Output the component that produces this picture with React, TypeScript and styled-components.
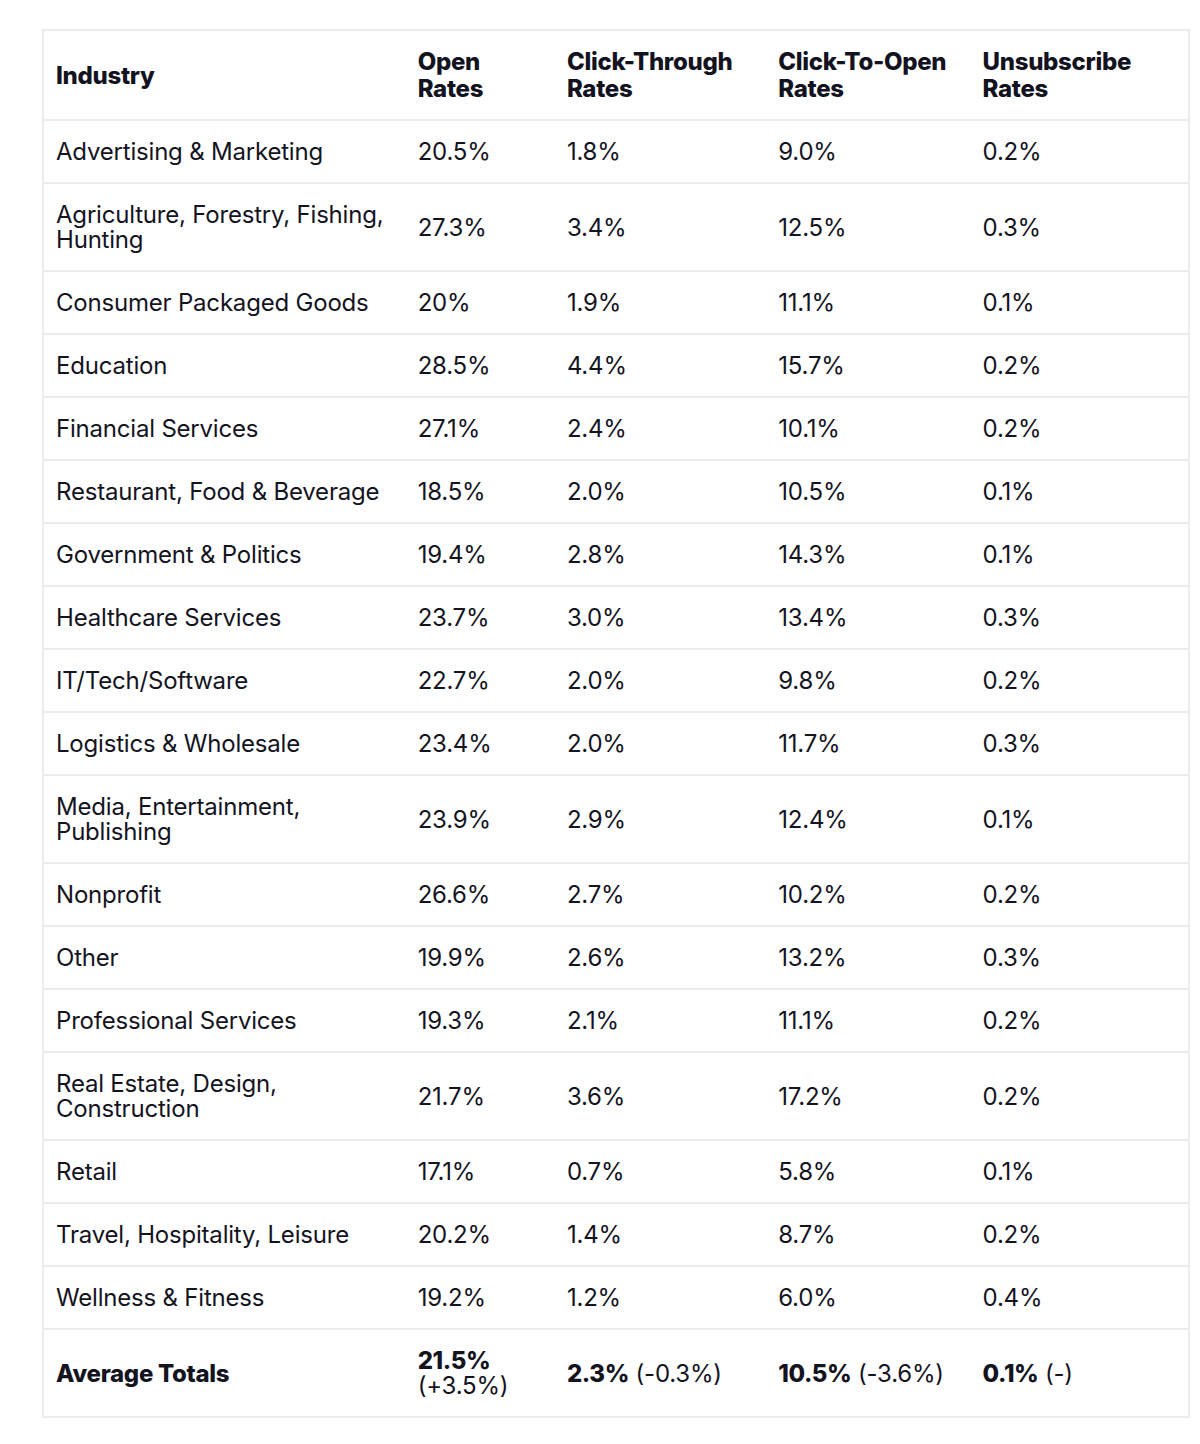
import React from "react";
import styled, { createGlobalStyle } from "styled-components";

const Global = createGlobalStyle`
  html, body { margin: 0; padding: 0; background: #ffffff; }
  body { font-family: Inter, "Noto Sans", "Liberation Sans", sans-serif; color: #14141f; }
`;

const Page = styled.div`
  padding: 29px 10px 26px 42px;
`;

const Table = styled.table`
  width: 1148px;
  border-collapse: collapse;
  table-layout: fixed;
  border: 2px solid #ebebeb;
`;

const HeadCell = styled.th`
  text-align: left;
  vertical-align: middle;
  font-weight: 800;
  font-size: 24px;
  line-height: 27px;
  letter-spacing: -0.3px;
  padding: 17px 12px;
  color: #13131f;
`;

const Row = styled.tr`
  border-bottom: 2px solid #ebebeb;
`;

const Cell = styled.td<{ $bold?: boolean }>`
  vertical-align: middle;
  font-size: 24px;
  line-height: 25px;
  font-weight: ${(p) => (p.$bold ? 800 : 400)};
  letter-spacing: ${(p) => (p.$bold ? "-0.3px" : "-0.2px")};
  padding: 18px 12px;
  color: #14141f;
`;

const Strong = styled.strong`
  font-weight: 800;
  letter-spacing: -0.4px;
`;

const Change = styled.span`
  font-weight: 400;
`;

const rows: [string, string, string, string, string][] = [
  ["Advertising & Marketing", "20.5%", "1.8%", "9.0%", "0.2%"],
  ["Agriculture, Forestry, Fishing, Hunting", "27.3%", "3.4%", "12.5%", "0.3%"],
  ["Consumer Packaged Goods", "20%", "1.9%", "11.1%", "0.1%"],
  ["Education", "28.5%", "4.4%", "15.7%", "0.2%"],
  ["Financial Services", "27.1%", "2.4%", "10.1%", "0.2%"],
  ["Restaurant, Food & Beverage", "18.5%", "2.0%", "10.5%", "0.1%"],
  ["Government & Politics", "19.4%", "2.8%", "14.3%", "0.1%"],
  ["Healthcare Services", "23.7%", "3.0%", "13.4%", "0.3%"],
  ["IT/Tech/Software", "22.7%", "2.0%", "9.8%", "0.2%"],
  ["Logistics & Wholesale", "23.4%", "2.0%", "11.7%", "0.3%"],
  ["Media, Entertainment, Publishing", "23.9%", "2.9%", "12.4%", "0.1%"],
  ["Nonprofit", "26.6%", "2.7%", "10.2%", "0.2%"],
  ["Other", "19.9%", "2.6%", "13.2%", "0.3%"],
  ["Professional Services", "19.3%", "2.1%", "11.1%", "0.2%"],
  ["Real Estate, Design, Construction", "21.7%", "3.6%", "17.2%", "0.2%"],
  ["Retail", "17.1%", "0.7%", "5.8%", "0.1%"],
  ["Travel, Hospitality, Leisure", "20.2%", "1.4%", "8.7%", "0.2%"],
  ["Wellness & Fitness", "19.2%", "1.2%", "6.0%", "0.4%"],
];

export default function App() {
  return (
    <Page>
      <Global />
      <Table>
        <colgroup>
          <col style={{ width: 362 }} />
          <col style={{ width: 149 }} />
          <col style={{ width: 211 }} />
          <col style={{ width: 204 }} />
          <col style={{ width: 218 }} />
        </colgroup>
        <thead>
          <Row>
            <HeadCell>Industry</HeadCell>
            <HeadCell>Open Rates</HeadCell>
            <HeadCell>Click-Through Rates</HeadCell>
            <HeadCell>Click-To-Open Rates</HeadCell>
            <HeadCell>Unsubscribe Rates</HeadCell>
          </Row>
        </thead>
        <tbody>
          {rows.map((r) => (
            <Row key={r[0]}>
              {r.map((c, i) => (
                <Cell key={i}>{c}</Cell>
              ))}
            </Row>
          ))}
          <Row>
            <Cell $bold>Average Totals</Cell>
            <Cell>
              <Strong>21.5%</Strong> <Change>(+3.5%)</Change>
            </Cell>
            <Cell>
              <Strong>2.3%</Strong> <Change>(-0.3%)</Change>
            </Cell>
            <Cell>
              <Strong>10.5%</Strong> <Change>(-3.6%)</Change>
            </Cell>
            <Cell>
              <Strong>0.1%</Strong> <Change>(-)</Change>
            </Cell>
          </Row>
        </tbody>
      </Table>
    </Page>
  );
}
